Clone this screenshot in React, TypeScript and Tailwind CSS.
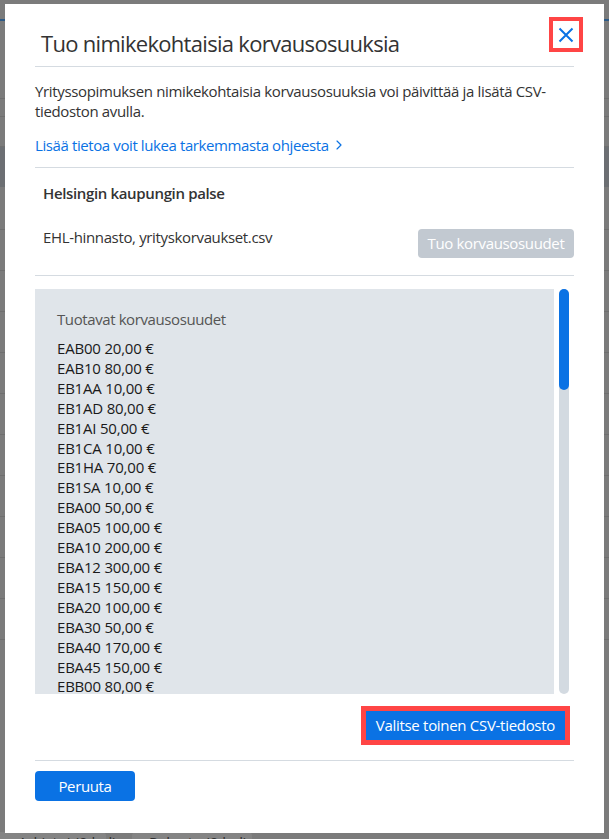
import { ChevronRight } from "lucide-react";

const rows = [
    ["EAB00", "20,00"],
    ["EAB10", "80,00"],
    ["EB1AA", "10,00"],
    ["EB1AD", "80,00"],
    ["EB1AI", "50,00"],
    ["EB1CA", "10,00"],
    ["EB1HA", "70,00"],
    ["EB1SA", "10,00"],
    ["EBA00", "50,00"],
    ["EBA05", "100,00"],
    ["EBA10", "200,00"],
    ["EBA12", "300,00"],
    ["EBA15", "150,00"],
    ["EBA20", "100,00"],
    ["EBA30", "50,00"],
    ["EBA40", "170,00"],
    ["EBA45", "150,00"],
    ["EBB00", "80,00"],
    ["EBB10", "60,00"],
    ["EBB20", "40,00"],
];

function Backdrop() {
    return (
        <div className="absolute inset-0 bg-[#7b7b7b] flex flex-col">
            <div className="h-[19px]" />
            <div className="h-[2px] bg-[#2d5a86]" />
            <div className="h-[78px] border-b border-[#6f6f6f]" />
            <div className="h-[18px] border-b border-[#6f6f6f]" />
            <div className="h-[30px] border-b border-[#6f6f6f]" />
            <div className="h-[40px] bg-[#6c6f73]" />
            <div className="h-[43px] border-b border-[#6f6f6f]" />
            {Array.from({ length: 10 }).map((_, i) => (
                <div key={i} className="h-[41px] border-b border-[#6f6f6f]" />
            ))}
            <div className="flex-1" />
            <div className="flex h-[7px] overflow-hidden">
                <div className="w-[106px] bg-[#848484] rounded-tr-sm text-[15px] text-[#2f2f2f] pl-[18px] font-['Open_Sans',sans-serif] leading-[20px] whitespace-nowrap">Arkistoi (0 kpl)</div>
                <div className="ml-[26px] w-[120px] bg-[#848484] rounded-t-sm text-[15px] text-[#2f2f2f] pl-[17px] font-['Open_Sans',sans-serif] leading-[20px] whitespace-nowrap">Palauta (0 kpl)</div>
            </div>
        </div>
    );
}

export default function App() {
    return (
        <div className="relative w-[609px] h-[839px] overflow-hidden font-['Open_Sans',sans-serif]">
            <Backdrop />

            <div className="absolute left-[5px] top-[4px] w-[599px] h-[829px] bg-white px-[30px] flex flex-col text-[#333]">
                {/* header */}
                <div className="flex justify-between items-start pt-[13px] border-b border-[#d5dbe1]">
                    <h1 className="mt-[11px] mb-[8px] ml-[6px] text-[22px] leading-[30px] font-normal text-[#333] tracking-[-0.7px]">
                        Tuo nimikekohtaisia korvausosuuksia
                    </h1>
                    <button className="mr-[-9px] w-[34px] h-[35px] border-[4px] border-[#ff4545] flex items-center justify-center">
                        <svg width="16" height="16" viewBox="0 0 16 16">
                            <path d="M1.5 1.5 L14.5 14.5 M14.5 1.5 L1.5 14.5" stroke="#0a72e4" strokeWidth="2" fill="none" />
                        </svg>
                    </button>
                </div>

                <p className="mt-[14px] text-[15px] leading-[20px] tracking-[-0.35px] text-[#333]">
                    Yrityssopimuksen nimikekohtaisia korvausosuuksia voi päivittää ja lisätä CSV-tiedoston avulla.
                </p>

                <a className="mt-[14px] flex items-center gap-0.5 text-[15px] leading-[20px] tracking-[-0.4px] text-[#0a72e4]">
                    Lisää tietoa voit lukea tarkemmasta ohjeesta
                    <ChevronRight className="w-4 h-4" strokeWidth={1.75} />
                </a>

                <div className="mt-[12px] border-b border-[#d5dbe1]" />

                <div className="mt-[15px] pl-[8px] text-[15px] leading-[20px] font-semibold text-[#333] tracking-[-0.35px]">
                    Helsingin kaupungin palse
                </div>

                <div className="mt-[24px] flex justify-between items-start">
                    <span className="pl-[8px] text-[15px] leading-[20px] text-[#333] tracking-[-0.35px]">
                        EHL-hinnasto, yrityskorvaukset.csv
                    </span>
                    <button className="mt-[2px] w-[156px] h-[29px] rounded-sm bg-[#c2c9d1] text-white text-[15px] tracking-[-0.35px]">
                        Tuo korvausosuudet
                    </button>
                </div>

                <div className="mt-[17px] border-b border-[#d5dbe1]" />

                <div className="mt-[13px] flex gap-[5px] h-[405px]">
                    <div className="flex-1 bg-[#e0e5ea] overflow-hidden pt-[20px] px-[22px]">
                        <div className="text-[15px] leading-[20px] text-[#555] tracking-[-0.4px]">Tuotavat korvausosuudet</div>
                        <ul className="mt-[10px]">
                            {rows.map(([code, sum]) => (
                                <li key={code} className="text-[15px] leading-[19.9px] font-medium text-[#1a1a1a] tracking-[-0.2px]">
                                    {code} {sum} €
                                </li>
                            ))}
                        </ul>
                    </div>
                    <div className="w-[10px] mr-[5px] rounded-full bg-[#d3dae1] flex flex-col">
                        <div className="h-[101px] rounded-full bg-[#0a72e4]" />
                    </div>
                </div>

                <div className="mt-[12px] flex justify-end pr-[4px]">
                    <div className="border-[5px] border-[#ff4545]">
                        <button className="h-[29px] px-[10px] bg-[#0a72e4] text-white text-[15px] tracking-[-0.3px]">
                            Valitse toinen CSV-tiedosto
                        </button>
                    </div>
                </div>

                <div className="mt-[15px] border-b border-[#d5dbe1]" />

                <div className="mt-[10px]">
                    <button className="w-[100px] h-[30px] rounded-sm bg-[#0a72e4] text-white text-[15px] tracking-[-0.35px]">
                        Peruuta
                    </button>
                </div>
            </div>
        </div>
    );
}
